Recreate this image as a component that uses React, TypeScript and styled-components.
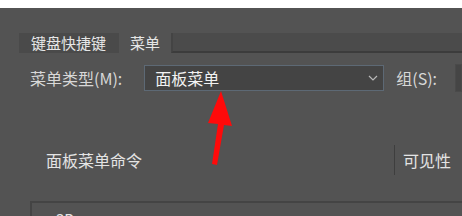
import React from 'react'
import styled, { createGlobalStyle } from 'styled-components'

const GlobalStyle = createGlobalStyle`
  html, body {
    margin: 0;
    padding: 0;
    background: #ffffff;
  }
  body {
    font-family: "Noto Sans CJK SC", "Noto Sans", "Liberation Sans", sans-serif;
  }
`

const tabs = [
  { label: '键盘快捷键', active: false },
  { label: '菜单', active: true },
]

const App = () => {
  return (
    <>
      <GlobalStyle />
      <SPage>
        <SPanel>
          <STabBar>
            {tabs.map((tab) => (
              <STab key={tab.label} $active={tab.active}>
                {tab.label}
              </STab>
            ))}
            <STabFill />
          </STabBar>

          <SFormRow>
            <SLabel>菜单类型(M):</SLabel>
            <SSelect>
              <span>面板菜单</span>
              <SChevron viewBox="0 0 10 6">
                <path d="M1 1 L5 5 L9 1" fill="none" stroke="#b8b8b8" strokeWidth="1.2" />
              </SChevron>
            </SSelect>
            <SLabel>组(S):</SLabel>
            <SGroupBox />
          </SFormRow>

          <SHeaderRow>
            <SHeaderCell>面板菜单命令</SHeaderCell>
            <SDivider />
            <SHeaderCell>可见性</SHeaderCell>
          </SHeaderRow>

          <STable>
            <STableRow>3D</STableRow>
          </STable>

          <SArrow viewBox="0 0 30 80">
            <path d="M17 0 L28 35 L20 34 L13 74 L8 73 L14 33 L4 32 Z" fill="#ff0a0a" />
          </SArrow>
        </SPanel>
      </SPage>
    </>
  )
}

const SPage = styled.div`
  width: 462px;
  height: 216px;
  overflow: hidden;
  background: #ffffff;
  padding-top: 8px;
  box-sizing: border-box;
`

const SPanel = styled.div`
  position: relative;
  height: 208px;
  background: #535353;
  display: flex;
  flex-direction: column;
  padding-top: 25px;
  box-sizing: border-box;
`

const STabBar = styled.div`
  display: flex;
  height: 20px;
  padding-left: 19px;
`

const STab = styled.div<{ $active: boolean }>`
  display: flex;
  align-items: center;
  padding: ${({ $active }) => ($active ? '0 11px 0 11px' : '0 13px 0 12px')};
  background: ${({ $active }) => ($active ? '#535353' : '#4a4a4a')};
  color: #e6e6e6;
  font-size: 15px;
  line-height: 20px;
`

const STabFill = styled.div`
  flex: 1;
  background: #4b4b4b;
  border-left: 2px solid #444444;
  border-bottom: 2px solid #3c3c3c;
  box-sizing: border-box;
`

const SFormRow = styled.div`
  display: flex;
  align-items: center;
  height: 26px;
  margin-top: 12px;
  padding-left: 30px;
`

const SLabel = styled.div`
  color: #d8d8d8;
  font-size: 16px;
  line-height: 20px;
  white-space: nowrap;
`

const SSelect = styled.div`
  display: flex;
  align-items: center;
  justify-content: space-between;
  flex-shrink: 0;
  width: 240px;
  height: 26px;
  margin-left: 22px;
  margin-right: 12px;
  padding: 0 5px 0 10px;
  box-sizing: border-box;
  background: #444444;
  border: 1px solid #5d6975;
  color: #f2f2f2;
  font-size: 16px;
`

const SChevron = styled.svg`
  width: 10px;
  height: 6px;
`

const SGroupBox = styled.div`
  flex: 1;
  height: 26px;
  margin-left: 18px;
  background: #454545;
  border: 1px solid #4a4a4a;
`

const SHeaderRow = styled.div`
  display: flex;
  align-items: center;
  height: 32px;
  margin-top: 54px;
  padding-left: 46px;
`

const SHeaderCell = styled.div`
  color: #e4e4e4;
  font-size: 16px;
  line-height: 20px;
  &:first-child {
    width: 348px;
  }
`

const SDivider = styled.div`
  width: 1px;
  height: 30px;
  margin-right: 8px;
  background: #3e3e3e;
`

const STable = styled.div`
  margin-top: 26px;
  margin-left: 30px;
  flex: 1;
  border-top: 2px solid #444444;
  border-left: 2px solid #444444;
`

const STableRow = styled.div`
  padding: 5px 0 0 24px;
  color: #e4e4e4;
  font-size: 15px;
`

const SArrow = styled.svg`
  position: absolute;
  left: 204px;
  top: 83px;
  width: 30px;
  height: 80px;
`

export default App
